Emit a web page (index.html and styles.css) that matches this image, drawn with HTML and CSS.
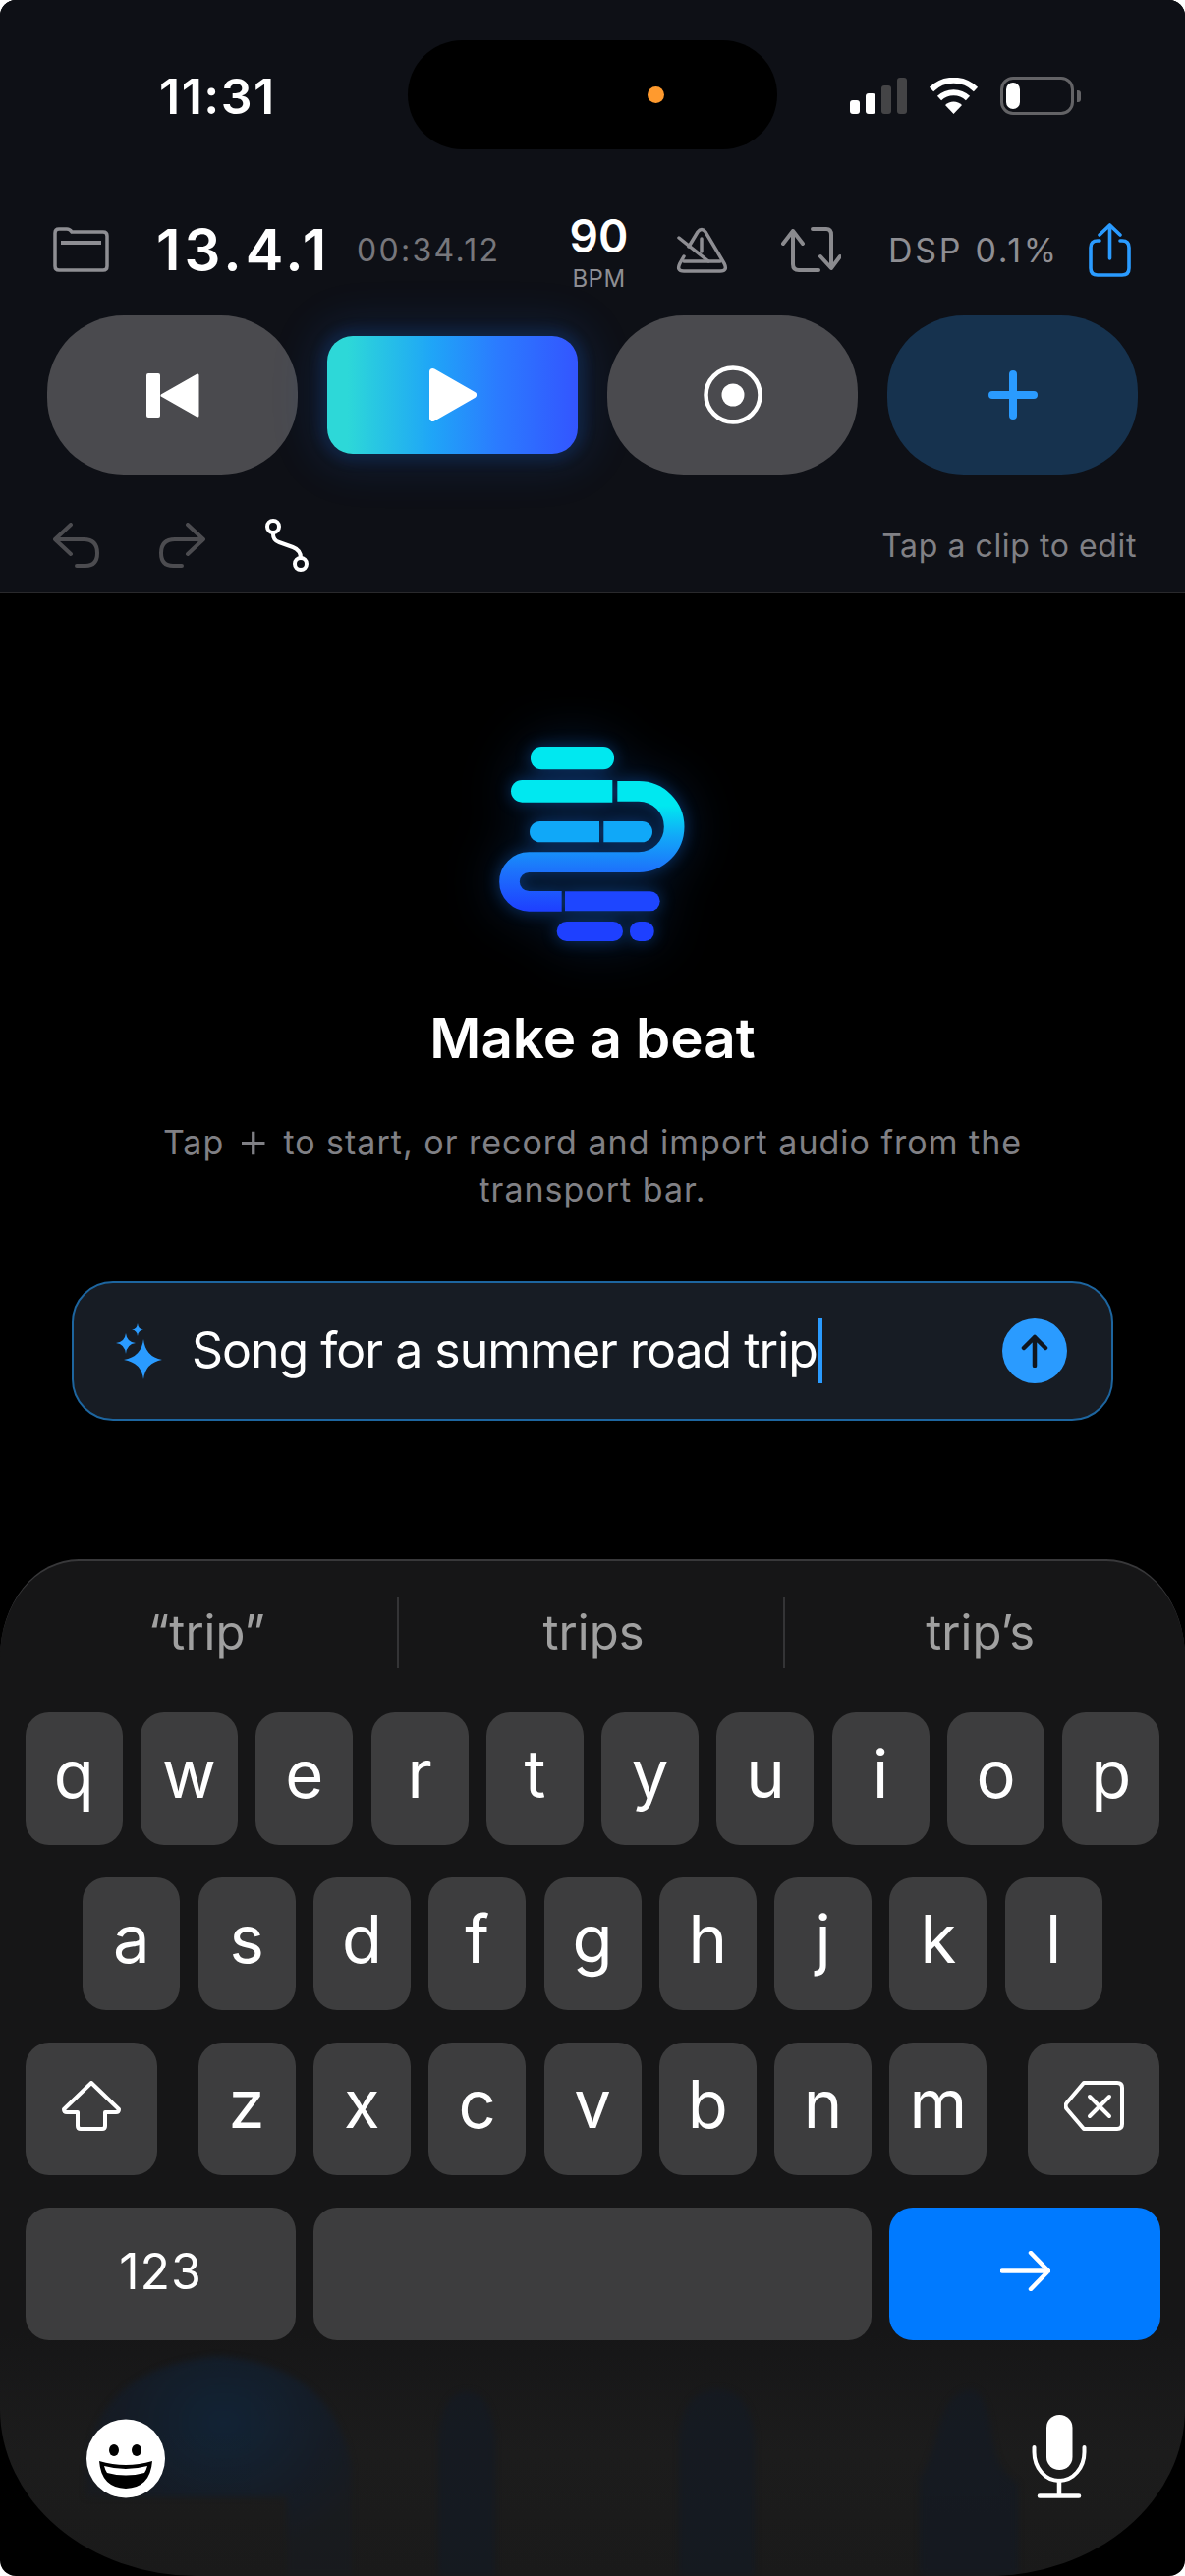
FILE: index.html
```html
<!DOCTYPE html>
<html lang="en">
<head>
    <meta charset="UTF-8">
    <meta name="viewport" content="width=device-width, initial-scale=1.0">
    <title>Make a beat</title>
    <link rel="stylesheet" href="styles.css">
</head>
<body>
<div class="app">
    <header class="topbar">
        <div class="status">
            <span class="clock">11:31</span>
            <div class="island"><span class="island-dot"></span></div>
            <div class="status-icons">
                <div class="signal">
                    <span class="bar bar-1"></span>
                    <span class="bar bar-2"></span>
                    <span class="bar bar-3 off"></span>
                    <span class="bar bar-4 off"></span>
                </div>
                <svg class="wifi" width="51" height="37" viewBox="0 0 51 37" fill="none" stroke="#fff" stroke-width="6">
                    <path d="M3 12 A32 32 0 0 1 48 12"/>
                    <path d="M11 21 A21 21 0 0 1 40 21"/>
                    <path d="M25.5 37 L17 28 A12 12 0 0 1 34 28 Z" fill="#fff" stroke="none"/>
                </svg>
                <div class="battery"><span class="battery-fill"></span></div>
                <span class="battery-nub"></span>
            </div>
        </div>

        <div class="transport">
            <svg class="folder" width="57" height="46" viewBox="0 0 57 46" fill="none" stroke="#8e8e93" stroke-width="3.5">
                <path d="M2 6 Q2 2 6 2 H14 Q17 2 19 5 H51 Q55 5 55 9 V40 Q55 44 51 44 H6 Q2 44 2 40 Z"/>
                <path d="M8 16 H49" stroke-width="4"/>
            </svg>
            <span class="position">13.4.1</span>
            <span class="elapsed">00:34.12</span>
            <div class="tempo">
                <span class="tempo-value">90</span>
                <span class="tempo-label">BPM</span>
            </div>
            <svg class="metronome" width="53" height="47" viewBox="0 0 53 47" fill="none" stroke="#8e8e93" stroke-width="3.5" stroke-linecap="round">
                <path d="M13 20 L22 5 Q26 0 30 5 L49 37 Q53 45 45 45 H8 Q0 45 4 37 L8 30"/>
                <path d="M8 35 H45"/>
                <path d="M3 11 L33 35"/>
                <path d="M26 12 V25"/>
            </svg>
            <svg class="loop" width="61" height="46" viewBox="0 0 61 46" fill="none" stroke="#8a8a8e" stroke-width="4" stroke-linecap="round" stroke-linejoin="round">
                <path d="M2 17 L12 4 L22 17 M12 4 V38 Q12 44 18 44 H38"/>
                <path d="M32 2 H46 Q51 2 51 8 V41 M40 30 L51 42 L60 30"/>
            </svg>
            <span class="dsp">DSP 0.1%</span>
            <svg class="share" width="43" height="55" viewBox="0 0 43 55" fill="none" stroke="#2a9bff" stroke-width="3.6" stroke-linecap="round" stroke-linejoin="round">
                <path d="M11 18 H9 Q2 18 2 25 V46 Q2 53 9 53 H34 Q41 53 41 46 V25 Q41 18 34 18 H32"/>
                <path d="M21.5 36 V2 M11 12 L21.5 2 L32 12"/>
            </svg>
        </div>

        <div class="controls">
            <button class="ctl">
                <svg width="54" height="45" viewBox="0 0 54 45" fill="#fff">
                    <rect x="0" y="0" width="14" height="45" rx="2"/>
                    <path d="M16 22.5 L52 2 V43 Z" stroke="#fff" stroke-width="3" stroke-linejoin="round"/>
                </svg>
            </button>
            <button class="ctl play">
                <svg width="48" height="54" viewBox="0 0 48 54" fill="#fff">
                    <path d="M3.500 3.500 L44.500 27 L3.500 50.500 Z" stroke="#fff" stroke-width="7" stroke-linejoin="round"/>
                </svg>
            </button>
            <button class="ctl">
                <svg width="60" height="60" viewBox="0 0 60 60">
                    <circle cx="30" cy="30" r="27.5" fill="none" stroke="#fff" stroke-width="4.5"/>
                    <circle cx="30" cy="30" r="11.5" fill="#fff"/>
                </svg>
            </button>
            <button class="ctl add">
                <svg width="50" height="50" viewBox="0 0 50 50" fill="none" stroke="#2a9bff" stroke-width="8" stroke-linecap="round">
                    <path d="M25 4 V46 M4 25 H46"/>
                </svg>
            </button>
        </div>

        <div class="tools">
            <svg class="undo" width="47" height="46" viewBox="0 0 47 46" fill="none" stroke="#4c4c50" stroke-width="4" stroke-linecap="round" stroke-linejoin="round">
                <path d="M18 2 L2 17 L18 32 M2 17 H31 Q45 17 45 31 Q45 44 33 44 H24"/>
            </svg>
            <svg class="redo" width="47" height="46" viewBox="0 0 47 46" fill="none" stroke="#4c4c50" stroke-width="4" stroke-linecap="round" stroke-linejoin="round">
                <path d="M29 2 L45 17 L29 32 M45 17 H16 Q2 17 2 31 Q2 44 14 44 H23"/>
            </svg>
            <svg class="curve" width="44" height="54" viewBox="0 0 44 54" fill="none" stroke="#fff" stroke-width="4" stroke-linecap="round">
                <circle cx="8" cy="8" r="6"/>
                <circle cx="36" cy="46" r="6"/>
                <path d="M8 14 V16 Q8 22 14 24 L28 29 Q36 32 36 40"/>
            </svg>
            <span class="hint">Tap a clip to edit</span>
        </div>
    </header>

    <main class="empty">
        <svg class="logo" width="260" height="240" viewBox="0 0 780 720">
            <defs>
                <linearGradient id="snake" gradientUnits="userSpaceOnUse" x1="0" y1="200" x2="0" y2="590">
                    <stop offset="0.18" stop-color="#00e8f0"/>
                    <stop offset="0.42" stop-color="#12a8f8"/>
                    <stop offset="0.66" stop-color="#1c78fb"/>
                    <stop offset="1" stop-color="#1e40ff"/>
                </linearGradient>
            </defs>
            <rect x="210" y="90" width="255" height="70" rx="33" fill="#00e8f0"/>
            <path d="M460 192 H184 A34 34 0 0 0 184 260 H460 Z" fill="#00e8f0"/>
            <path d="M420 318 H239 A32 32 0 0 0 239 382 H420 Z" fill="#10a8f8"/>
            <path d="M433 318 H550 A32 32 0 0 1 550 382 H433 Z" fill="#10a8f8"/>
            <path d="M475 226 H540 A108 108 0 0 1 540 443 H205 A59 59 0 0 0 205 562 H305" fill="none" stroke="url(#snake)" stroke-width="62"/>
            <path d="M315 532 H575 A30 30 0 0 1 575 592 H315 Z" fill="#1e46ff"/>
            <rect x="290" y="624" width="202" height="60" rx="30" fill="#1e40ff"/>
            <rect x="513" y="624" width="74" height="60" rx="28" fill="#1e40ff"/>
        </svg>
        <h1 class="empty-title">Make a beat</h1>
        <p class="empty-text">Tap <span class="plus">+</span> to start, or record and import audio from the<br>transport bar.</p>

        <div class="prompt">
            <svg class="sparkle" width="47" height="57" viewBox="0 0 47 57" fill="#2a9bff">
                <path d="M28 16 Q30 34 47 37 Q30 40 28 57 Q26 40 8 37 Q26 34 28 16 Z"/>
                <path d="M10 10 Q11 19 20 20 Q11 21 10 31 Q9 21 0 20 Q9 19 10 10 Z"/>
                <path d="M22 0 Q22.600 6 28 6.500 Q22.600 7 22 13 Q21.400 7 16 6.500 Q21.400 6 22 0 Z"/>
            </svg>
            <span class="prompt-text">Song for a summer road trip</span>
            <span class="caret"></span>
            <button class="send">
                <svg width="30" height="34" viewBox="0 0 30 34" fill="none" stroke="#10161e" stroke-width="4.500" stroke-linecap="round" stroke-linejoin="round">
                    <path d="M15 32 V3 M4 14 L15 3 L26 14"/>
                </svg>
            </button>
        </div>
    </main>

    <section class="keyboard">
        <svg class="kb-shadows" width="1206" height="230" viewBox="0 0 1206 230">
            <defs>
                <radialGradient id="blob" cx="0.52" cy="0.3" r="0.6">
                    <stop offset="0" stop-color="#10273f"/>
                    <stop offset="0.7" stop-color="#141c28"/>
                    <stop offset="1" stop-color="#181b20"/>
                </radialGradient>
            </defs>
            <path d="M87 130 Q90 20 220 6 Q340 14 358 120 V230 H292 V150 H87 Z" fill="url(#blob)"/>
            <path d="M446 230 V90 Q450 42 475 42 Q500 42 504 90 V230 Z" fill="#141a23"/>
            <path d="M691 230 V90 Q695 40 730 40 Q764 40 768 90 V230 Z" fill="#141a23"/>
            <path d="M936 230 V130 Q945 120 955 80 Q965 40 990 40 Q1005 45 1010 90 Q1015 125 1036 135 V230 Z" fill="#141a23"/>
        </svg>

        <div class="suggestions">
            <span class="suggestion">“trip”</span>
            <span class="suggestion sep">trips</span>
            <span class="suggestion sep">trip’s</span>
        </div>

        <div class="kb-row row-top">
            <span class="key">q</span><span class="key">w</span><span class="key">e</span><span class="key">r</span><span class="key">t</span><span class="key">y</span><span class="key">u</span><span class="key">i</span><span class="key">o</span><span class="key">p</span>
        </div>
        <div class="kb-row">
            <span class="key">a</span><span class="key">s</span><span class="key">d</span><span class="key">f</span><span class="key">g</span><span class="key">h</span><span class="key">j</span><span class="key">k</span><span class="key">l</span>
        </div>
        <div class="kb-row row-shift">
            <span class="key key-mod">
                <svg width="60" height="51" viewBox="0 0 60 51" fill="none" stroke="#fff" stroke-width="4" stroke-linejoin="round">
                    <path d="M30 2 L58 29 Q58 32 55 32 H44 V46 Q44 49 41 49 H19 Q16 49 16 46 V32 H5 Q2 32 2 29 Z"/>
                </svg>
            </span>
            <div class="letters">
                <span class="key">z</span><span class="key">x</span><span class="key">c</span><span class="key">v</span><span class="key">b</span><span class="key">n</span><span class="key">m</span>
            </div>
            <span class="key key-mod">
                <svg width="61" height="51" viewBox="0 0 61 51" fill="none" stroke="#fff" stroke-width="4" stroke-linecap="round" stroke-linejoin="round">
                    <path d="M20 2 H54 Q59 2 59 7 V44 Q59 49 54 49 H20 L3 29 Q0 25.500 3 22 Z"/>
                    <path d="M26 16 L46 36 M46 16 L26 36"/>
                </svg>
            </span>
        </div>
        <div class="kb-row row-bottom">
            <span class="key key-num">123</span>
            <span class="key key-space"></span>
            <span class="key key-go">
                <svg width="51" height="41" viewBox="0 0 51 41" fill="none" stroke="#fff" stroke-width="4.500" stroke-linecap="round" stroke-linejoin="round">
                    <path d="M2 20.500 H49 M31 2 L49 20.500 L31 39"/>
                </svg>
            </span>
        </div>

        <div class="kb-extras">
            <svg width="80" height="81" viewBox="0 0 80 81">
                <circle cx="40" cy="40.500" r="40" fill="#fff"/>
                <ellipse cx="28" cy="32" rx="5" ry="6"/>
                <ellipse cx="51" cy="32" rx="5" ry="6"/>
                <path d="M13 43 Q40 51 67 43 Q65 70 40 71 Q15 70 13 43 Z"/>
                <path d="M18 48 Q40 54 62 48 Q61 52 59 55 Q40 60 21 55 Q19 52 18 48 Z" fill="#fff"/>
            </svg>
            <svg width="56" height="85" viewBox="0 0 56 85" fill="#fff">
                <rect x="15" y="0" width="26.500" height="56" rx="13"/>
                <path d="M2.500 33 V38 A25.500 29 0 0 0 53.500 38 V33" fill="none" stroke="#fff" stroke-width="4" stroke-linecap="round"/>
                <path d="M28 67 V82 M8 82.500 H48" fill="none" stroke="#fff" stroke-width="4.500" stroke-linecap="round"/>
            </svg>
        </div>
    </section>
</div>
</body>
</html>
```

FILE: styles.css
```css
* {
    box-sizing: border-box;
}
body {
    margin: 0;
    background: #fff;
    font-family: Inter, "Liberation Sans", sans-serif;
    color: #fff;
}
button {
    border: none;
    padding: 0;
    font: inherit;
}
.app {
    width: 1206px;
    height: 2622px;
    background: #000;
    border-radius: 16px;
    overflow: hidden;
    display: flex;
    flex-direction: column;
}

/* Top bar */
.topbar {
    height: 604px;
    flex: none;
    background: #0e1016;
    border-bottom: 1px solid #29292c;
}
.status {
    display: flex;
    align-items: center;
    height: 111px;
    margin-top: 41px;
}
.clock {
    width: 415px;
    margin-top: 2px;
    padding-left: 162px;
    font-size: 50px;
    font-weight: 600;
    letter-spacing: 1.5px;
}
.island {
    width: 376px;
    height: 111px;
    border-radius: 56px;
    background: #000;
    position: relative;
}
.island-dot {
    position: absolute;
    left: 244px;
    top: 47px;
    width: 17px;
    height: 17px;
    border-radius: 50%;
    background: #ff9a2e;
}
.status-icons {
    display: flex;
    align-items: center;
    margin-left: 74px;
    margin-top: 2px;
}
.signal {
    display: flex;
    align-items: flex-end;
    gap: 6px;
    height: 37px;
}
.bar {
    width: 10px;
    border-radius: 3px;
    background: #fff;
}
.bar.off {
    background: #444446;
}
.bar-1 { height: 14px; }
.bar-2 { height: 21px; }
.bar-3 { height: 29px; }
.bar-4 { height: 37px; }
.wifi {
    margin-left: 22px;
}
.battery {
    width: 75px;
    height: 39px;
    margin-left: 22px;
    padding: 3px;
    border: 3px solid #636366;
    border-radius: 13px;
}
.battery-fill {
    display: block;
    width: 14px;
    height: 27px;
    border-radius: 7px;
    background: #fff;
}
.battery-nub {
    width: 4px;
    height: 12px;
    margin-left: 3px;
    border-radius: 0 3px 3px 0;
    background: #636366;
}

.transport {
    display: flex;
    align-items: center;
    height: 70px;
    margin-top: 70px;
    padding-left: 54px;
}
.transport svg {
    flex: none;
}
.transport span {
    white-space: nowrap;
}
.folder {
    margin-top: -6px;
}
.position {
    width: 171px;
    margin-left: 48px;
    margin-top: -6px;
    font-size: 58px;
    font-weight: 600;
    letter-spacing: 4px;
}
.elapsed {
    width: 142px;
    margin-left: 33px;
    margin-top: -6px;
    font-size: 32px;
    letter-spacing: 2.300px;
    color: #77777c;
}
.tempo {
    width: 59px;
    margin-left: 75px;
    display: flex;
    flex-direction: column;
    align-items: center;
}
.tempo-value {
    font-size: 46px;
    line-height: 46px;
    font-weight: 600;
}
.tempo-label {
    margin-top: 8px;
    font-size: 24px;
    line-height: 26px;
    letter-spacing: 0.500px;
    color: #8e8e93;
}
.metronome {
    margin-left: 49px;
    margin-top: -6px;
}
.loop {
    margin-left: 54px;
    margin-top: -6px;
}
.dsp {
    width: 171px;
    margin-left: 48px;
    margin-top: -6px;
    font-size: 34px;
    letter-spacing: 2.700px;
    color: #8e8e93;
}
.share {
    margin-left: 33px;
    margin-top: -5px;
}

.controls {
    display: flex;
    align-items: center;
    gap: 30px;
    height: 162px;
    margin-top: 29px;
    padding: 0 48px;
}
.ctl {
    width: 255px;
    height: 162px;
    border-radius: 78px;
    background: #4a4a4e;
    display: flex;
    align-items: center;
    justify-content: center;
}
.ctl.play {
    height: 120px;
    border-radius: 26px;
    background: linear-gradient(90deg, #2dd8d8 8%, #1fa5f7 42%, #2b7bff 68%, #3355ff 100%);
    box-shadow: 0 0 12px 8px rgba(26, 90, 170, 0.18), 0 0 44px 16px rgba(30, 100, 220, 0.14);
}
.ctl.add {
    background: #16324e;
}

.tools {
    display: flex;
    align-items: center;
    height: 54px;
    margin-top: 45px;
    padding: 0 49px 0 54px;
}
.redo {
    margin-left: 61px;
}
.curve {
    margin-left: 61px;
}
.hint {
    margin-left: auto;
    font-size: 32px;
    letter-spacing: 0.600px;
    color: #808085;
}

/* Empty state */
.empty {
    flex: 1;
    display: flex;
    flex-direction: column;
    align-items: center;
    padding-top: 126px;
}
.logo {
    flex: none;
    margin-right: 6px;
    filter: drop-shadow(0 0 8px rgba(24, 110, 230, 0.38)) drop-shadow(0 0 26px rgba(20, 110, 230, 0.28));
}
.empty-title {
    margin: 52px 0 0;
    font-size: 56.500px;
    line-height: 70px;
    font-weight: 600;
}
.empty-text {
    margin: 47px 0 0;
    font-size: 34px;
    line-height: 48px;
    text-align: center;
    letter-spacing: 1px;
    color: #808085;
}
.plus {
    margin: 0 2px;
    font-size: 52px;
    font-weight: 300;
    line-height: 0;
    vertical-align: -3px;
}
.prompt {
    width: 1060px;
    height: 142px;
    margin-top: 69px;
    padding: 0 45px 0 43px;
    display: flex;
    align-items: center;
    background: #171c24;
    border: 2px solid #1d659f;
    border-radius: 42px;
}
.sparkle {
    flex: none;
}
.prompt-text {
    margin-left: 30px;
    margin-top: -2px;
    font-size: 50px;
    letter-spacing: -1px;
    white-space: nowrap;
}
.caret {
    width: 5px;
    height: 66px;
    background: #2a9bff;
}
.send {
    width: 66px;
    height: 66px;
    margin-left: auto;
    border-radius: 50%;
    background: #2a9bff;
    display: flex;
    align-items: center;
    justify-content: center;
}

/* Keyboard */
.keyboard {
    height: 1035px;
    flex: none;
    position: relative;
    background: linear-gradient(180deg, #161617 76%, #1c1c1c 88%, #1a1a1a 100%);
    border-top: 2px solid #38383a;
    border-radius: 80px 80px 200px 200px / 100px 100px 170px 170px;
    overflow: hidden;
}
.kb-shadows {
    position: absolute;
    left: 0;
    bottom: 0;
    opacity: 0.75;
    filter: blur(3px);
}
.suggestions {
    display: flex;
    align-items: center;
    height: 154px;
    padding: 0 15px 0 12px;
    position: relative;
}
.suggestion {
    flex: 1;
    height: 72px;
    margin-top: -8px;
    padding-left: 5px;
    font-size: 49px;
    line-height: 72px;
    text-align: center;
    color: #a0a0a0;
}
.suggestion.sep {
    border-left: 2px solid #343436;
}
.kb-row {
    display: flex;
    justify-content: center;
    gap: 18.300px;
    margin-top: 33px;
    position: relative;
}
.kb-row.row-top {
    margin-top: 0;
}
.kb-row.row-shift {
    justify-content: space-between;
    padding: 0 26px;
}
.kb-row.row-bottom {
    padding: 0 25px 0 26px;
    gap: 18px;
}
.letters {
    display: flex;
    gap: 18.300px;
}
.key {
    width: 99px;
    height: 135px;
    border-radius: 24px;
    background: #3d3d3e;
    display: flex;
    align-items: center;
    justify-content: center;
    font-size: 67px;
    line-height: 1;
    padding-bottom: 11px;
}
.key-mod {
    width: 134px;
    padding-bottom: 6px;
}
.key-num {
    width: 275px;
    padding-bottom: 6px;
    font-size: 50px;
    letter-spacing: 1px;
}
.key-space {
    flex: 1;
}
.key-go {
    width: 276px;
    padding-bottom: 6px;
    background: #007aff;
}
.kb-extras {
    display: flex;
    justify-content: space-between;
    align-items: flex-end;
    margin-top: 76px;
    padding: 0 100px 0 88px;
    position: relative;
}
```
